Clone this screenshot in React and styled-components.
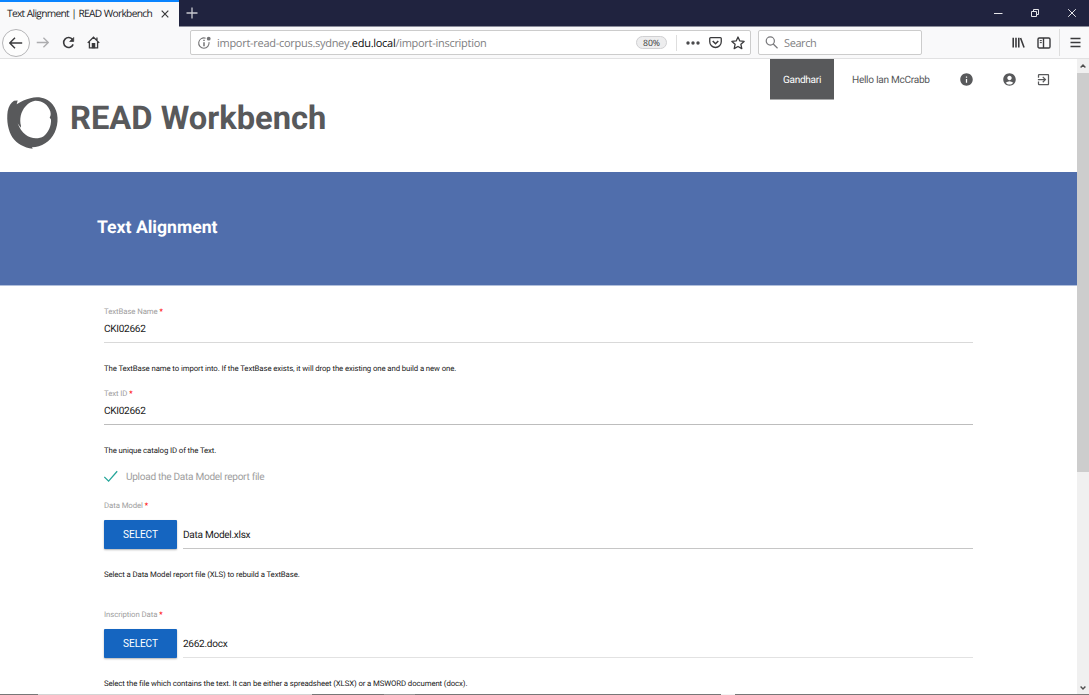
import React from 'react';
import styled, { createGlobalStyle, css } from 'styled-components';
import { MdInfo, MdAccountCircle, MdExitToApp } from 'react-icons/md';

const GlobalStyle = createGlobalStyle`
  * {
    box-sizing: border-box;
  }

  body {
    margin: 0;
    overflow: hidden;
    background: #fff;
    font-family: Roboto, sans-serif;
    text-rendering: geometricPrecision;
  }

  svg {
    display: block;
    flex: none;
  }
`;

const Window = styled.div`
  display: flex;
  flex-direction: column;
  width: 1089px;
  height: 695px;
  overflow: hidden;
`;

const TabStrip = styled.div`
  display: flex;
  flex: none;
  height: 27px;
  background: #20233f;
  border-bottom: 1px solid #8b8d9a;
`;

const Tab = styled.div`
  display: flex;
  align-items: center;
  justify-content: space-between;
  width: 179px;
  height: 27px;
  padding: 0 10px 2px 7px;
  background: #f9f9fa;
  border-top: 2px solid #0a84ff;
  color: #1a1a1e;
  font: 10.2px/23px 'Open Sans', sans-serif;
  letter-spacing: -0.7px;
  word-spacing: 0.4px;
  white-space: nowrap;
`;

const NewTab = styled.div`
  flex: 1;
  padding: 7px 0 0 7px;
`;

const WindowButtons = styled.div`
  display: flex;
  gap: 27px;
  padding: 8px 12px 0 0;
`;

const Toolbar = styled.div`
  display: flex;
  align-items: center;
  flex: none;
  height: 32px;
  background: #f9f9fa;
  border-bottom: 1px solid #e1e1e2;
`;

const NavButtons = styled.div`
  display: flex;
  align-items: center;
  width: 190px;
  padding-left: 2px;
`;

const BackButton = styled.div`
  display: flex;
  align-items: center;
  justify-content: center;
  width: 28px;
  height: 28px;
  margin-right: 6px;
  border: 1px solid #b5b5b7;
  border-radius: 50%;
  background: #fdfdfd;
`;

const Glyph = styled.span`
  margin-right: ${(p) => p.$gap}px;
`;

const Field = styled.div`
  display: flex;
  align-items: center;
  width: ${(p) => p.$width}px;
  height: 25px;
  margin-right: 7px;
  padding: 0 5px 0 6px;
  background: #fff;
  border: 1px solid #ccc;
  border-radius: 2px;
  color: #808082;
  font: 11px/25px 'Open Sans', sans-serif;
  white-space: nowrap;
`;

const Url = styled.div`
  flex: 1;
  margin-left: 6px;
  padding-top: 2px;
  letter-spacing: -0.28px;

  b {
    color: #0c0c0d;
    font-weight: 400;
  }
`;

const SearchText = styled.div`
  margin-left: 6px;
  padding-top: 2px;
  letter-spacing: -0.4px;
`;

const Zoom = styled.div`
  width: 31px;
  height: 13px;
  margin-right: 9px;
  border: 1px solid #d0d0d2;
  border-radius: 7px;
  background: #ededee;
  color: #333;
  font-size: 8.7px;
  line-height: 12px;
  text-align: center;
`;

const Divider = styled.div`
  width: 1px;
  height: ${(p) => p.$height}px;
  margin: 0 ${(p) => p.$right}px 0 0;
  background: #dedede;
`;

const ToolbarEnd = styled.div`
  display: flex;
  align-items: center;
  justify-content: flex-end;
  flex: 1;
  padding-right: 8px;
`;

const Viewport = styled.div`
  display: flex;
  flex: none;
  height: 635px;
`;

const Page = styled.div`
  width: 1077px;
  height: 635px;
  overflow: hidden;
  background: #fff;
`;

const Scrollbar = styled.div`
  display: flex;
  flex-direction: column;
  align-items: center;
  justify-content: space-between;
  width: 12px;
  padding: 5px 0 4px;
  background: #f0f0f0;
`;

const Thumb = styled.div`
  width: 12px;
  height: 399px;
  margin: 5px 0 auto;
  background: #cdcdcd;
`;

const Header = styled.header`
  display: flex;
  align-items: flex-start;
  justify-content: space-between;
  height: 113px;
`;

const Brand = styled.div`
  display: flex;
  align-items: flex-start;
  padding-top: 31px;
`;

const BrandName = styled.h1`
  margin: 6px 0 0;
  color: #58595b;
  font-size: 32.7px;
  line-height: 44px;
  font-weight: 700;
  white-space: nowrap;
`;

const UserNav = styled.nav`
  display: flex;
  align-items: center;
  height: 41px;
  padding-right: 26px;
  color: #58595b;
  font-size: 10.1px;
  letter-spacing: -0.3px;
`;

const Corpus = styled.div`
  width: 64px;
  height: 41px;
  margin-right: 18px;
  background: #58595b;
  border-bottom: 1px solid #a9aaab;
  color: #fff;
  line-height: 43px;
  text-align: center;
`;

const Greeting = styled.div`
  width: 79px;
  margin-right: 28px;
  padding-top: 1px;
  white-space: nowrap;
`;

const Banner = styled.div`
  height: 114px;
  padding: 44px 97px 0;
  background: #506eac;
  border-bottom: 1px solid #b1bfdb;
`;

const BannerTitle = styled.h2`
  margin: 0;
  color: #fff;
  font-size: 17.6px;
  line-height: 25px;
  font-weight: 700;
`;

const Form = styled.form`
  padding: 19px 104px 0;
`;

const Group = styled.div`
  height: ${(p) => p.$height}px;
`;

const Label = styled.label`
  display: block;
  height: 12px;
  color: #9e9e9e;
  font-size: 7.8px;
  line-height: 13px;
  letter-spacing: -0.09px;

  span {
    color: #f00;
  }
`;

const valueText = css`
  color: #212121;
  font-size: 10.1px;
  letter-spacing: -0.3px;
  white-space: nowrap;
`;

const Value = styled.div`
  ${valueText}
  height: 26px;
  line-height: 25px;
  border-bottom: 1px solid ${(p) => p.$line};
`;

const Help = styled.p`
  margin: ${(p) => p.$top}px 0 0;
  color: #212121;
  font-size: 7.8px;
  line-height: 12px;
  letter-spacing: -0.11px;
  white-space: nowrap;
`;

const CheckRow = styled.div`
  display: flex;
  align-items: center;
  gap: 8px;
  height: 15px;
  margin-bottom: 15px;
  color: #9e9e9e;
  font-size: 10.1px;
  line-height: 17px;
  letter-spacing: -0.3px;
`;

const CheckText = styled.span`
  padding-top: 2px;
`;

const FileRow = styled.div`
  display: flex;
  gap: 6px;
  height: 29px;
  margin-top: 9px;
`;

const SelectButton = styled.button`
  width: 73px;
  height: 29px;
  padding: 1px 0 0;
  border: 0;
  border-radius: 1px;
  background: #1565c0;
  box-shadow: 0 1px 2px rgba(0, 0, 0, 0.3);
  color: #fff;
  font: 10.1px/28px Roboto, sans-serif;
  letter-spacing: -0.1px;
`;

const FileName = styled.div`
  ${valueText}
  flex: 1;
  height: 29px;
  line-height: 32px;
  border-bottom: 1px solid ${(p) => p.$line};
`;

const Taskbar = styled.div`
  flex: none;
  height: 1px;
  background: linear-gradient(
    to right,
    #777 0 38px,
    #d4d4d4 38px 312px,
    #777 312px 384px,
    #999 384px 415px,
    #777 415px 721px,
    #f4f4f4 721px 735px,
    #777 735px
  );
`;

const Icon = ({ w = 14, h = w, box = '0 0 14 14', color = '#3a3a3c', width = 1.4, children }) => (
  <svg width={w} height={h} viewBox={box} fill="none" stroke={color} strokeWidth={width}>
    {children}
  </svg>
);

const Logo = () => (
  <svg width="70" height="65" viewBox="0 -1.5 210 195" fill="#58595b">
    <path
      fillRule="evenodd"
      d="M53 30 L42 31 C33 37 26 47 23 62 C19 91 24 120 38 142 C50 159 72 172 98 175 L96 170 C124 170 151 154 164 126 C177 98 176 64 158 42 C142 22 116 17 91 23 C77 26 64 32 50 41 Z M105 31 C127 30 145 44 151 63 C153 72 152 76 149 81 L153 87 C154 107 145 126 131 137 C116 147 91 145 77 133 C66 124 58 112 53 98 L62 112 L63 106 C58 86 62 63 77 47 C86 37 94 33 105 31 Z"
    />
  </svg>
);

const TextField = ({ label, value, help, line }) => (
  <Group $height={82}>
    <Label>
      {label} <span>*</span>
    </Label>
    <Value $line={line}>{value}</Value>
    <Help $top={20}>{help}</Help>
  </Group>
);

const FileField = ({ label, value, help, line }) => (
  <Group $height={109}>
    <Label>
      {label} <span>*</span>
    </Label>
    <FileRow>
      <SelectButton type="button">SELECT</SelectButton>
      <FileName $line={line}>{value}</FileName>
    </FileRow>
    <Help $top={20}>{help}</Help>
  </Group>
);

const BrowserChrome = () => (
  <>
    <TabStrip>
      <Tab>
        Text Alignment | READ Workbench
        <Icon w={8} box="0 0 8 8" width={1.2}>
          <path d="M.7.7l6.6 6.6M7.3.7L.7 7.3" />
        </Icon>
      </Tab>
      <NewTab>
        <Icon w={12} box="0 0 12 12" color="#c8c9d0" width={1.3}>
          <path d="M6 .5v11M.5 6h11" />
        </Icon>
      </NewTab>
      <WindowButtons>
        <Icon w={10} box="0 0 10 10" color="#e6e6ea" width={1}>
          <path d="M1 5.5h8.5" />
        </Icon>
        <Icon w={10} box="0 0 10 10" color="#e6e6ea" width={1}>
          <path d="M1.5 3.5h5v5h-5zM3.5 3.5v-2h5v5h-2" />
        </Icon>
        <Icon w={10} box="0 0 10 10" color="#e6e6ea" width={1}>
          <path d="M1.2 1.2l7.6 7.6M8.8 1.2L1.2 8.8" />
        </Icon>
      </WindowButtons>
    </TabStrip>
    <Toolbar>
      <NavButtons>
        <BackButton>
          <Icon>
            <path d="M.8 7h12.4M6 1.8L.8 7 6 12.2" />
          </Icon>
        </BackButton>
        <Glyph $gap={13}>
          <Icon w={13} color="#adadaf">
            <path d="M.8 7h12.4M8 1.8L13.2 7 8 12.2" />
          </Icon>
        </Glyph>
        <Glyph $gap={12}>
          <Icon w={13} width={1.7}>
            <path d="M11.4 3.9A5.3 5.3 0 1 0 12 9" />
            <path d="M12.6 1.6v4.3H8.3z" fill="#3a3a3c" strokeWidth=".8" />
          </Icon>
        </Glyph>
        <Icon w={13}>
          <path d="M.8 7.4L7 1.3l6.2 6.1M2.6 6.2v6.6h8.8V6.2M10.7 1.6v2.6" />
          <path d="M5.8 12.5V8.3h2.4v4.2z" fill="#3a3a3c" />
        </Icon>
      </NavButtons>
      <Field $width={561}>
        <Icon w={14} color="#747476" width={1.1}>
          <path d="M8.6 2.2A5.2 5.2 0 1 0 12 6.2" />
          <path d="M7 6.2v4M7 3.8v1.3" strokeWidth="1.5" />
          <circle cx="11.7" cy="2.7" r="1.9" fill="#747476" stroke="none" />
        </Icon>
        <Url>
          import-read-corpus.sydney.<b>edu.local</b>/import-inscription
        </Url>
        <Zoom>80%</Zoom>
        <Divider $height={16} $right={9} />
        <Glyph $gap={9}>
          <Icon w={14} h={4} box="0 0 14 4" width={0}>
            <g fill="#4a4a4c">
              <circle cx="2" cy="2" r="1.7" />
              <circle cx="7" cy="2" r="1.7" />
              <circle cx="12" cy="2" r="1.7" />
            </g>
          </Icon>
        </Glyph>
        <Glyph $gap={9}>
          <Icon w={13}>
            <path d="M1.8 1.8h10.4q1 0 1 1v3.4a6.2 6.2 0 0 1-12.4 0V2.8q0-1 1-1z" />
            <path d="M4 5.4l3 2.9 3-2.9" strokeWidth="1.7" />
          </Icon>
        </Glyph>
        <Icon w={14} width={1.3}>
          <path strokeLinejoin="round" d="M7 1l1.8 3.9 4.3.5-3.2 2.9.9 4.3L7 10.5l-3.8 2.1.9-4.3L.9 5.4l4.3-.5z" />
        </Icon>
      </Field>
      <Field $width={164}>
        <Icon w={13} color="#77777a" width={1.3}>
          <circle cx="5.7" cy="5.4" r="4.4" />
          <path d="M8.9 8.6l4.6 4.6" />
        </Icon>
        <SearchText>Search</SearchText>
      </Field>
      <ToolbarEnd>
        <Glyph $gap={12}>
          <Icon w={13} width={1.7}>
            <path d="M1.3 2v10.5M4.3 2v10.5M7.3 2v10.5M9.2 2.2l3.8 10.2" />
          </Icon>
        </Glyph>
        <Glyph $gap={8}>
          <Icon w={14}>
            <rect x="1" y="2" width="12" height="10" rx="1.3" />
            <path d="M6.5 2v10" />
            <path d="M2.8 4.6h2M2.8 6.6h2" strokeWidth="1" />
          </Icon>
        </Glyph>
        <Divider $height={27} $right={10} />
        <Icon w={11} box="0 0 11 11">
          <path d="M.5 1.5h10M.5 5.5h10M.5 9.5h10" />
        </Icon>
      </ToolbarEnd>
    </Toolbar>
  </>
);

export default function App() {
  return (
    <Window>
      <GlobalStyle />
      <BrowserChrome />
      <Viewport>
        <Page>
          <Header>
            <Brand>
              <Logo />
              <BrandName>READ Workbench</BrandName>
            </Brand>
            <UserNav>
              <Corpus>Gandhari</Corpus>
              <Greeting>Hello Ian McCrabb</Greeting>
              <Glyph $gap={28}>
                <MdInfo size={15} />
              </Glyph>
              <Glyph $gap={19}>
                <MdAccountCircle size={15} />
              </Glyph>
              <MdExitToApp size={15} />
            </UserNav>
          </Header>
          <Banner>
            <BannerTitle>Text Alignment</BannerTitle>
          </Banner>
          <Form>
            <TextField
              label="TextBase Name"
              value="CKI02662"
              line="#d9d9d9"
              help="The TextBase name to import into. If the TextBase exists, it will drop the existing one and build a new one."
            />
            <TextField
              label="Text ID"
              value="CKI02662"
              line="#bdbdbd"
              help="The unique catalog ID of the Text."
            />
            <CheckRow>
              <Icon w={14} color="#26a69a" width={1.3}>
                <path d="M.3 6.9l4.3 4.2L13.2 1.2" />
              </Icon>
              <CheckText>Upload the Data Model report file</CheckText>
            </CheckRow>
            <FileField
              label="Data Model"
              value="Data Model.xlsx"
              line="#c6c6c6"
              help="Select a Data Model report file (XLS) to rebuild a TextBase."
            />
            <FileField
              label="Inscription Data"
              value="2662.docx"
              line="#e2e2e2"
              help="Select the file which contains the text. It can be either a spreadsheet (XLSX) or a MSWORD document (docx)."
            />
          </Form>
        </Page>
        <Scrollbar>
          <Icon w={6} h={4} box="0 0 6 4" color="#505050">
            <path d="M.6 3.4L3 1l2.4 2.4" />
          </Icon>
          <Thumb />
          <Icon w={6} h={4} box="0 0 6 4" color="#505050">
            <path d="M.6.6L3 3 5.4.6" />
          </Icon>
        </Scrollbar>
      </Viewport>
      <Taskbar />
    </Window>
  );
}
